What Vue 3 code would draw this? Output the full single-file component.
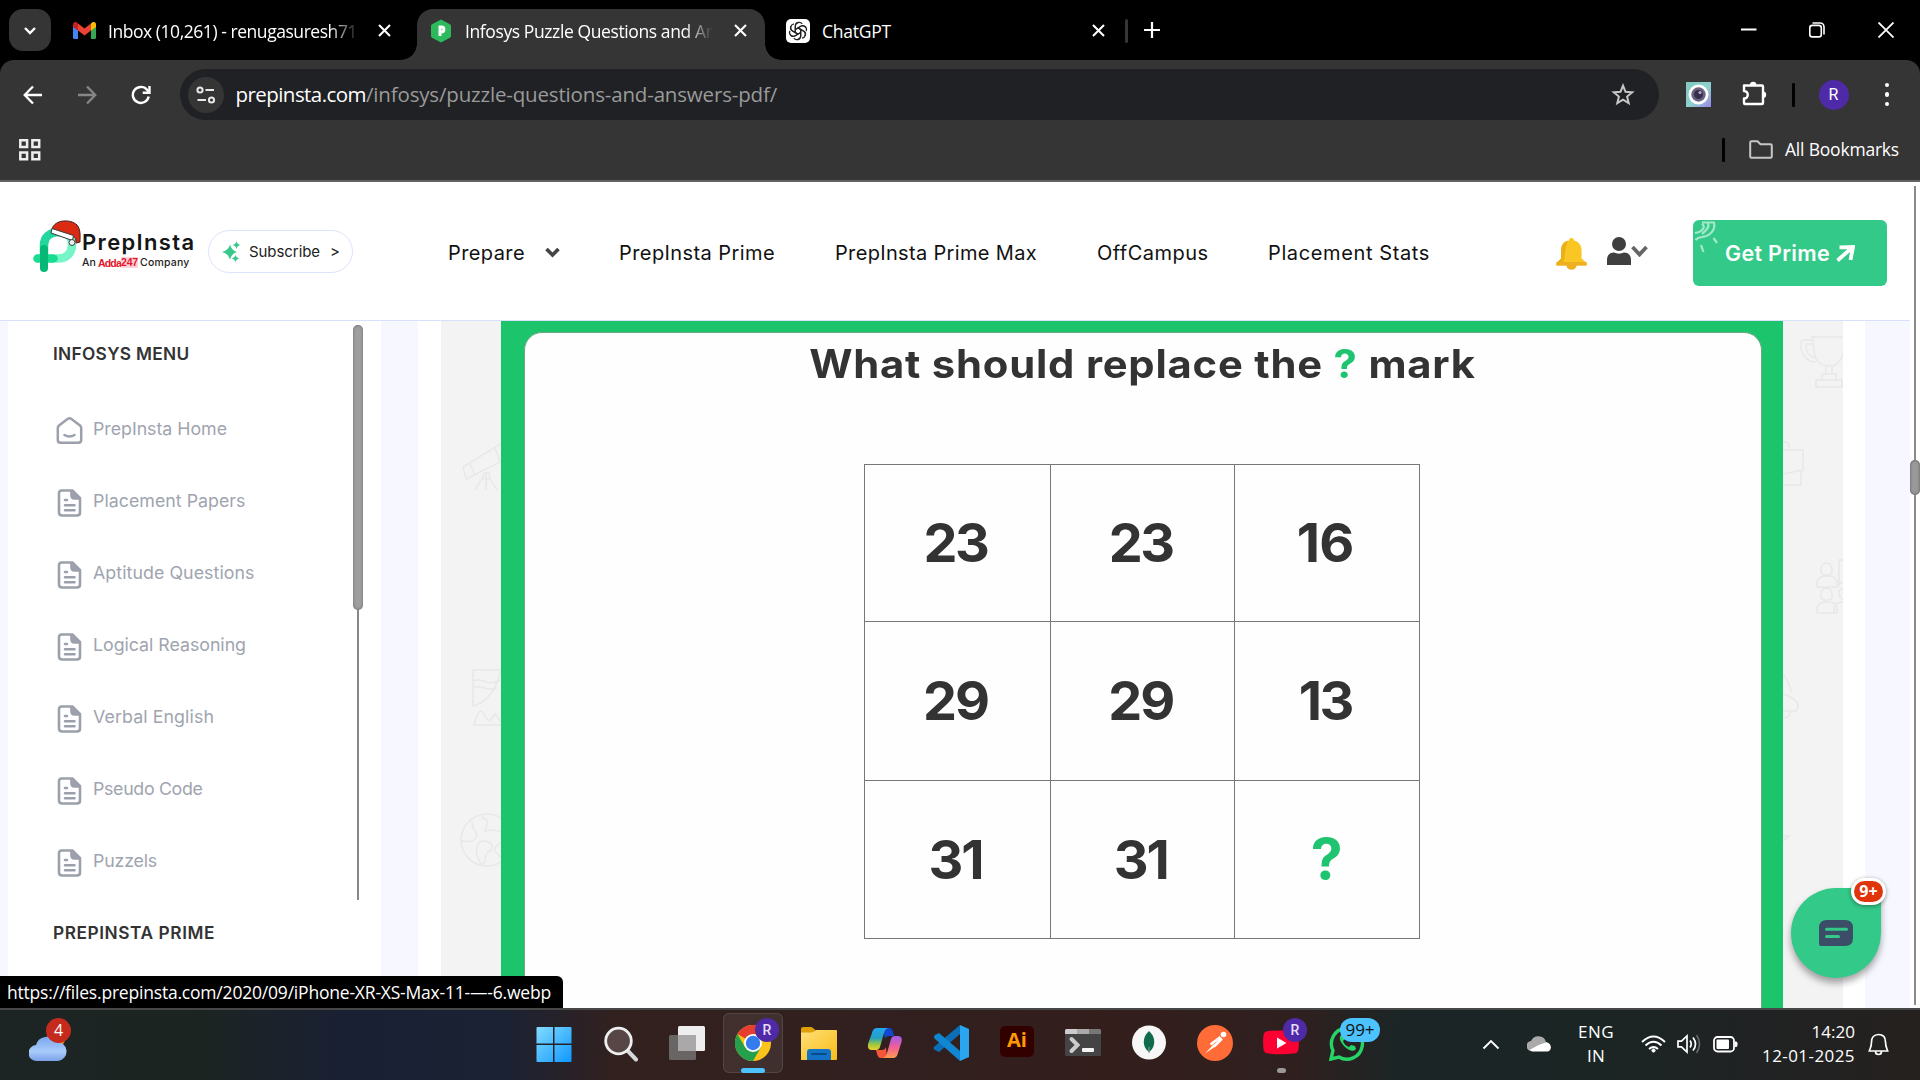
<script setup>
// Stretches or tightens letter spacing so a label takes the given width in px.
const vFit = {
  mounted(el, { value }) {
    const count = el.textContent.length
    const natural = el.getBoundingClientRect().width
    el.style.letterSpacing = (value - natural) / count + 'px'
  },
}

const menu = [
  { label: 'PrepInsta Home', width: 134, home: true },
  { label: 'Placement Papers', width: 152.5 },
  { label: 'Aptitude Questions', width: 161.5 },
  { label: 'Logical Reasoning', width: 153 },
  { label: 'Verbal English', width: 121 },
  { label: 'Pseudo Code', width: 109.5 },
  { label: 'Puzzels', width: 64 },
]

const cells = [
  ['23', 64], ['23', 64], ['16', 57],
  ['29', 65], ['29', 65], ['13', 53],
  ['31', 54], ['31', 54], ['?', 34],
]
</script>

<template>
  <div class="screen">
    <div class="tabs">
      <div class="tab-search">
        <svg width="14" height="9" viewBox="0 0 14 9"><path d="M2 2l5 5 5-5" fill="none" stroke="#fff" stroke-width="2.4" /></svg>
      </div>
      <div class="tab first">
        <svg class="fav" width="23" height="17" viewBox="0 0 23 17">
          <path d="M0 2.500V15.500Q0 17 1.500 17H5V6z" fill="#4285f4" />
          <path d="M23 2.500V15.500Q23 17 21.500 17H18V6z" fill="#34a853" />
          <path d="M5 8.500V1.500l6.500 5L18 1.500v7L11.500 13.500z" fill="#ea4335" />
          <path d="M0 2.500C0 0 2.500-1 5 1.500v7L0 5z" fill="#c5221f" />
          <path d="M23 2.500C23 0 20.500-1 18 1.500v7L23 5z" fill="#fbbc04" />
        </svg>
        <div class="tab-label l1"><span v-fit="249">Inbox (10,261) - renugasuresh71</span></div>
        <svg class="x" width="13" height="13" viewBox="0 0 13 13"><path d="M1 1l11 11M12 1L1 12" stroke="#fff" stroke-width="2.1" /></svg>
      </div>
      <div class="tab active">
        <svg class="fav" width="20" height="24" viewBox="0 0 20 24">
          <path d="M10 .5l9 4.800q1 .6 1 1.700v10q0 1.100-1 1.700L10 23.500 1 18.700q-1-.6-1-1.700V7q0-1.100 1-1.700z" fill="#2cba5c" />
          <path d="M9 17V8h1.500a2.300 2.300 0 010 4.800H9" fill="none" stroke="#fff" stroke-width="3" />
        </svg>
        <div class="tab-label l2"><span v-fit="251">Infosys Puzzle Questions and An</span></div>
        <svg class="x" width="13" height="13" viewBox="0 0 13 13"><path d="M1 1l11 11M12 1L1 12" stroke="#fff" stroke-width="2.1" /></svg>
      </div>
      <div class="tab third">
        <svg class="fav" width="24" height="24" viewBox="0 0 24 24">
          <rect width="24" height="24" rx="5" fill="#fff" />
          <g fill="none" stroke="#222" stroke-width="1.200">
            <path v-for="a in 6" :key="a" :transform="`rotate(${a * 60} 12 12)`" d="M9.300 13.600V7.200a3.900 3.900 0 016.900-2.300M9.300 10.400l5.400-3.100a3.900 3.900 0 015.200 1.100" />
          </g>
        </svg>
        <div class="tab-label l3"><span v-fit="69">ChatGPT</span></div>
        <svg class="x" width="13" height="13" viewBox="0 0 13 13"><path d="M1 1l11 11M12 1L1 12" stroke="#fff" stroke-width="2.1" /></svg>
      </div>
      <i class="tab-rule"></i>
      <svg class="plus" width="16" height="16" viewBox="0 0 16 16"><path d="M8 0v16M0 8h16" stroke="#fff" stroke-width="2.200" /></svg>
      <div class="win">
        <svg width="16" height="16" viewBox="0 0 16 16"><path d="M0 7.500h15.500" stroke="#fff" stroke-width="2" /></svg>
        <svg width="16" height="16" viewBox="0 0 16 16" fill="none" stroke="#fff" stroke-width="1.600"><rect x=".8" y="3.400" width="11.500" height="11.500" rx="2.500" /><path d="M3.500 1h7.500a4 4 0 014 4v7.500" /></svg>
        <svg width="16" height="16" viewBox="0 0 16 16"><path d="M.5.5l15 15M15.500.5l-15 15" stroke="#fff" stroke-width="1.800" /></svg>
      </div>
    </div>

    <div class="chrome">
      <div class="toolbar">
        <svg class="t-back" width="20" height="20" viewBox="0 0 20 20" fill="none" stroke="#fff" stroke-width="2.300"><path d="M19 10H2M10 1.500L1.700 10l8.300 8.500" /></svg>
        <svg class="t-fwd" width="20" height="20" viewBox="0 0 20 20" fill="none" stroke="#868686" stroke-width="2.300"><path d="M1 10h17M10 1.500l8.300 8.500-8.300 8.500" /></svg>
        <svg class="t-rel" width="20" height="20" viewBox="0 0 20 20" fill="none" stroke="#fff" stroke-width="2.400"><path d="M17.700 11.500A8 8 0 1116 4.800L18 7.300M18.500 1v6.800h-6.800" /></svg>
        <div class="url">
          <div class="site">
            <svg width="20" height="18" viewBox="0 0 20 18" fill="none" stroke="#e8e8e8" stroke-width="2"><circle cx="4" cy="4" r="2.600" /><path d="M9.500 4H18M1.500 14H10" /><circle cx="15.500" cy="14" r="2.600" /></svg>
          </div>
          <span v-fit="130.500" class="host">prepinsta.com</span><span v-fit="411" class="path">/infosys/puzzle-questions-and-answers-pdf/</span>
          <svg class="star" width="24" height="23" viewBox="0 0 24 23"><path d="M12 2.600l2.500 6.200 6.700.5-5.100 4.300 1.600 6.500-5.700-3.500-5.700 3.500 1.600-6.500L2.800 9.300l6.700-.5z" fill="none" stroke="#c7c7c7" stroke-width="2" /></svg>
        </div>
        <svg class="ext" width="25" height="25" viewBox="0 0 25 25">
          <defs><linearGradient id="eg" x1="0" y1="0" x2="1" y2="1"><stop offset="0" stop-color="#7fc9bf" /><stop offset=".55" stop-color="#8fd0cf" /><stop offset="1" stop-color="#9a86e8" /></linearGradient></defs>
          <rect width="25" height="25" fill="url(#eg)" /><circle cx="12.500" cy="12.500" r="10" fill="#fff" /><circle cx="12.500" cy="12.500" r="7.200" fill="#6b6180" /><circle cx="12.500" cy="12.500" r="4.500" fill="#37304d" /><circle cx="14" cy="10.500" r="1.500" fill="#b7aecb" />
        </svg>
        <svg class="puz" width="25" height="25" viewBox="0 0 25 25"><path d="M2 4.500h18q1 0 1 1V22q0 1-1 1H3q-1 0-1-1v-4.500c5 0 5-7.500 0-7.500z" fill="none" stroke="#fff" stroke-width="2.400" stroke-linejoin="round" /><path d="M8 4a3.200 3.200 0 016.400 0zM21 10.500a3.200 3.200 0 010 6.400z" fill="#fff" /></svg>
        <i class="bar"></i>
        <div class="avatar">R</div>
        <div class="dots"><i></i><i></i><i></i></div>
      </div>
      <div class="bookmarks">
        <svg width="22" height="22" viewBox="0 0 22 22" fill="none" stroke="#eee" stroke-width="2.500"><path d="M1.300 1.300h6.800v6.800H1.300zM13.400 1.300h6.800v6.800h-6.800zM1.300 13.400h6.800v6.800H1.300zM13.400 13.400h6.800v6.800h-6.800z" /></svg>
        <i class="bar"></i>
        <svg width="24" height="19" viewBox="0 0 24 19"><path d="M2.500 1.200h6l3 3h10q1.300 0 1.300 1.300v11q0 1.300-1.300 1.300h-19q-1.300 0-1.300-1.300v-14q0-1.300 1.300-1.300z" fill="none" stroke="#c7c7c7" stroke-width="2" /></svg>
        <span v-fit="114" class="all">All Bookmarks</span>
      </div>
    </div>

    <div class="page">
      <header>
        <div class="logo">
          <svg width="49" height="54" viewBox="0 0 49 54" fill="none">
            <path d="M23 38.500h2c9 0 14-6 14-14 0-3-1-7-4-10" stroke="#76f5c9" stroke-width="8.500" />
            <path d="M11 38V25c0-7 5-12.500 14-13 4 0 7 1 9 3" stroke="#21d79d" stroke-width="8.500" />
            <path d="M4.500 38.500h16" stroke="#18dc8f" stroke-width="8.500" stroke-linecap="round" />
            <path d="M11 29v19" stroke="#05b878" stroke-width="8" stroke-linecap="round" />
            <path d="M19 9C22-1 38-1 44 5c4 5 3 11 3 17l-4 1c0-5-1-6-3-6z" fill="#db2b13" stroke="#3a2320" />
            <path d="M19 8.500l21.500 7-1 5L18 13z" fill="#fff" stroke="#3a3a3a" />
            <circle cx="39" cy="22.500" r="3" fill="#eee" stroke="#444" />
          </svg>
          <div class="brand">
            <b v-fit="113.500">PrepInsta</b>
            <small><span v-fit="14">An</span><em><span v-fit="23">Adda</span><u><span v-fit="17">247</span></u></em><span v-fit="49.500">Company</span></small>
          </div>
        </div>
        <div class="sub">
          <svg width="19" height="21" viewBox="0 0 19 21" fill="#37c98c"><path d="M8 3.500q1.500 6 7 7.500-5.500 1.500-7 7.500-1.500-6-8-7.500 6.500-1.500 8-7.500zM14.500 0q.7 3.300 4 4-3.300.7-4 4-.7-3.300-4-4 3.300-.7 4-4zM13.500 14q.6 2.800 3.500 3.500-2.900.7-3.500 3.500-.7-2.800-3.500-3.500 2.800-.7 3.500-3.500z" /></svg>
          <span v-fit="71" class="sub-t">Subscribe</span><span v-fit="8">&gt;</span>
        </div>
        <nav>
          <span v-fit="77">Prepare</span>
          <svg width="15" height="11" viewBox="0 0 15 11"><path d="M1.500 2l6 6 6-6" fill="none" stroke="#444" stroke-width="3.600" /></svg>
          <span v-fit="156" class="n2">PrepInsta Prime</span>
          <span v-fit="202" class="n3">PrepInsta Prime Max</span>
          <span v-fit="111.500" class="n4">OffCampus</span>
          <span v-fit="162" class="n5">Placement Stats</span>
        </nav>
        <svg class="bell" width="31" height="32" viewBox="0 0 31 32">
          <path d="M15.500 0c2 0 2.500 1.400 2.500 2.600 5 1.200 7.600 5 7.600 10v8l5 4.400v2.400H.4V25l5-4.400v-8c0-5 2.600-8.800 7.600-10C13 1.400 13.500 0 15.500 0z" fill="#f9c623" /><path d="M.4 24h30.200v3.400H.4zM10.500 27.400h10a5 4.400 0 01-10 0z" fill="#eeb020" /><path d="M12 2.800c-5 1.200-7 5-7 9.800v8L1 24.500h6c3-5 1-14 5-21.700z" fill="#eab018" />
        </svg>
        <svg class="user" width="24" height="28" viewBox="0 0 24 28" fill="#3f3f3f"><ellipse cx="12" cy="7" rx="7" ry="7" /><path d="M0 28v-5c0-5 3-7.500 7-7.500 3 1.500 7 1.500 10 0 4 0 7 2.500 7 7.500v5z" /></svg>
        <svg class="uchev" width="17" height="12" viewBox="0 0 17 12"><path d="M1.500 2l7 7.500 7-7.500" fill="none" stroke="#666" stroke-width="3.800" /></svg>
        <div class="prime">
          <svg class="rocket" width="24" height="33" viewBox="0 0 24 33" fill="none" stroke="#a4e8cb" stroke-width="2.200"><path d="M8 4c4 2 1 8-7 9M8 2.500h12c2 8-5 14-12 14.500-3 .5-5 1-6.500 3M14 3c2 5-3 8-6 11M19.500 18l3.500 5M7 25l2.500 7" /></svg>
          <span v-fit="105">Get Prime</span>
          <svg width="19" height="17" viewBox="0 0 19 17"><path d="M1.500 15.500L14.500 4M3.500 2.300l13.500-.3-2.500 13" fill="none" stroke="#fff" stroke-width="3.800" /></svg>
        </div>
      </header>

      <div class="content">
        <aside>
          <div class="menu-scroll">
            <div class="menu">
              <h4><span v-fit="136.500">INFOSYS MENU</span></h4>
              <div v-for="m in menu" :key="m.label" class="item">
                <svg v-if="m.home" width="27" height="28" viewBox="0 0 27 28" fill="none" stroke="#9ba0ac" stroke-width="2.500"><path d="M3 8.500L11.500 2q2-1.300 4 0L24 8.500q1.200 1 1.200 2.500v12q0 2.700-2.700 2.700h-18Q1.800 25.700 1.800 23V11q0-1.500 1.200-2.500zM8.500 18q5 3 10 0" stroke-linecap="round" /></svg>
                <svg v-else width="27" height="28" viewBox="0 0 27 28" fill="none" stroke="#9ba0ac" stroke-width="2.600"><path d="M5.500 1.500h11l7.500 7.500v14.500q0 3-3 3H6q-3 0-3-3v-19q0-3 2.500-3z" /><path d="M15.500 2v4.500q0 3 3 3H24" fill="#9ba0ac" /><path d="M9 11h2M9 16.200h9.500M9 21.300h9.500" stroke-linecap="round" stroke-width="2.600" /></svg>
                <span v-fit="m.width">{{ m.label }}</span>
              </div>
            </div>
            <div class="track"><i></i></div>
          </div>
          <h4 class="second"><span v-fit="162">PREPINSTA PRIME</span></h4>
        </aside>
        <main>
          <svg class="doodle" width="60" height="687" viewBox="0 0 60 687">
            <path d="M22 146l39-24M25 158l36-18M22 146l3 12M29 143l5 11M54 127l5 13M40 159l-6 10M45 152v17M50 159l6 10M41 158h8l-1-6h-5z" />
            <path d="M60 349H32v36c16-4 24-20 28-36M32 360c10-5 14 7 27-1M32 367c9-5 14 5 24 0M32 404h29M33 404c4-17 8-17 12-7l4 3 5-7 6 8" />
            <circle cx="46" cy="519" r="26" /><path d="M31 500c-1 10 9 12 3 18-4 4-10 2-13 2M40 496c12 4 4 8 4 14 8-3 12 1 16 0M39 521c10-4 17 6 8 10-5 4-1 13-7 12-3-5-8-15-1-22zM60 522q-12 6 0 14" />
          </svg>
          <div class="green">
            <div class="board">
              <h1><span v-fit="665">What should replace the <b class="q">?</b> mark</span></h1>
              <div class="grid">
                <div v-for="(c, i) in cells" :key="i" class="cell" :class="{ q: c[0] === '?' }"><span v-fit="c[1]">{{ c[0] }}</span></div>
              </div>
            </div>
          </div>
          <svg class="doodle" width="60" height="687" viewBox="0 0 60 687">
            <path d="M28 16h32M30 16c0 20 3 27 14 29h5c9-2 12-10 13-29M29 19H19c-4 10 3 22 14 22M29 23h-6c-1 8 3 12 9 14M43 46v7M49 46v7M39 53h14v6H39zM33 59h26v7H33zM26 57v.5M28 48v.5M59 56v.5" />
            <path d="M0 129h20v20L0 153M18 150v14H0M0 121h3q3 0 3 7" />
            <path d="M38 251v-3a5.500 6 0 0111 0v3c0 4-11 4-11 0zM34 266v-4q1-7 8-7h4q7 0 8 7v4zM38 276v-3a5.500 6 0 0111 0v3c0 4-11 4-11 0zM34 292v-4q1-7 8-7h4q7 0 8 7v4zM51 292v-4q1-7 9-7M56 266v-27h4M56 262h4M60 267q-5 2-4 6t4 6" />
            <path d="M0 353q7 10 8 18M0 373q15 5 15 12-1 5-3 5H0M8 391q-3 8-8 5M0 515h6l-6 5" />
          </svg>
        </main>
        <div class="page-scroll"></div>
      </div>
      <div class="vtrack"><i></i></div>
      <div class="status"><span v-fit="544">https://files.prepinsta.com/2020/09/iPhone-XR-XS-Max-11-—-6.webp</span></div>
      <div class="chat">
        <svg width="34" height="26" viewBox="0 0 34 26"><path d="M8 0h18q8 0 8 8v10q0 8-8 8H2q-2 0-2-2V8q0-8 8-8z" fill="#3b4d67" /><path d="M7.500 9.300h20M7.500 16.500h12" stroke="#33c989" stroke-width="3" stroke-linecap="round" /></svg>
        <div class="count">9+</div>
      </div>
    </div>

    <footer>
      <div class="weather">
        <svg width="38" height="36" viewBox="0 0 38 36">
          <defs><linearGradient id="wc" x1="0" y1="0" x2="0" y2="1"><stop offset="0" stop-color="#7ba6ef" /><stop offset=".6" stop-color="#a9cbfa" /><stop offset="1" stop-color="#7aa2e8" /></linearGradient></defs>
          <circle cx="27" cy="13" r="9" fill="#f08a24" /><path d="M8 35a8 8 0 01-1-16A11 11 0 0127 16a9.500 9.500 0 012 19z" fill="url(#wc)" />
        </svg>
        <div class="wb">4</div>
      </div>
      <div class="apps">
        <div class="app start"><svg viewBox="0 0 36 36"><defs><linearGradient id="wg" x1="0" y1="0" x2="1" y2="1"><stop offset="0" stop-color="#83dcff" /><stop offset="1" stop-color="#0e97ff" /></linearGradient></defs><path d="M1.500 1H17v16.500H.5V2q0-1 1-1zM18.500 1h16q1 0 1 1v15.500h-17zM.5 19H17v17H1.500q-1 0-1-1zM18.500 19h17v16q0 1-1 1h-16z" fill="url(#wg)" /></svg></div>
        <div class="app start"><svg viewBox="0 0 36 36"><path d="M25 24l9 9.500" stroke="#d5d7da" stroke-width="4" stroke-linecap="round" /><circle cx="16.500" cy="15" r="12.800" fill="#584647" stroke="#eceeef" stroke-width="2.800" /></svg></div>
        <div class="app"><svg viewBox="0 0 36 36"><rect x="9" y="1" width="27" height="25" rx="1.500" fill="#eee" /><rect y="10" width="27" height="25" rx="1.500" fill="#6a6565" /><path d="M9 10h18v16H9z" fill="#aaa8a8" /></svg></div>
        <div class="app on"><svg viewBox="0 0 36 36"><circle cx="18" cy="18" r="18" fill="#fcc31a" /><path d="M18 18L2.400 9A18 18 0 0133.600 9H18z" fill="#e53e30" /><path d="M2.400 9A18 18 0 0018 36l7.800-13.500L10.200 22.500z" fill="#25a04c" /><circle cx="18" cy="18" r="9" fill="#fff" /><circle cx="18" cy="18" r="7.200" fill="#347bed" /></svg><b class="rb">R</b><i class="ind"></i></div>
        <div class="app"><svg viewBox="0 0 36 36"><defs><linearGradient id="fg" x1="0" y1="0" x2="1" y2="1"><stop offset="0" stop-color="#ffe07a" /><stop offset="1" stop-color="#f9bc16" /></linearGradient></defs><path d="M0 4q0-2 2-2h8.500l4 3-4 4H0z" fill="#e09f04" /><path d="M0 7.500h11l4-2.500h20q1 0 1 1v28q0 1-1 1H0z" fill="url(#fg)" /><path d="M6 35V27q0-3 3-3h18q3 0 3 3v8z" fill="#1273c6" /><path d="M11 29h14" stroke="#0a4a88" stroke-width="1.800" stroke-linecap="round" /></svg></div>
        <div class="app"><svg viewBox="0 0 36 36"><defs><linearGradient id="c1" x1="0" y1="0" x2="0" y2="1"><stop offset="0" stop-color="#22a7f2" /><stop offset=".45" stop-color="#23a0c0" /><stop offset=".75" stop-color="#9cc83f" /><stop offset="1" stop-color="#efcf2c" /></linearGradient><linearGradient id="c2" x1="0" y1="0" x2="0" y2="1"><stop offset="0" stop-color="#a05cf0" /><stop offset=".5" stop-color="#ef5f95" /><stop offset="1" stop-color="#ff9a50" /></linearGradient></defs><path d="M16 3h6q3 0 4 4l1 4h-5q-3 0-4 3z" fill="#1347d0" /><path d="M20 33h-6q-3 0-4-4l-1-4h6q3 0 4-3z" fill="#f5553a" /><path d="M10 3h11q-3 1-4 5l-4 14q-1 3-4 3H5q-5 0-4-6L5 8q1-5 5-5z" fill="url(#c1)" /><path d="M26 33H16q3-1 4-5l4-14q1-3 4-3h3q5 0 3.500 6L31 28q-1 5-5 5z" fill="url(#c2)" /></svg></div>
        <div class="app"><svg viewBox="0 0 36 36"><path d="M27 0v9L6 27 2 25q-3-2 0-4z" fill="#0b6fb8" /><path d="M2 10l4-2 21 18v10L2 14q-2-2 0-4z" fill="#1087d0" /><path d="M27 0l9 4v28l-9 4z" fill="#2aa5ef" /></svg></div>
        <div class="app"><div class="ai">Ai</div></div>
        <div class="app"><svg viewBox="0 0 36 36"><rect y="4" width="36" height="27" rx="1.500" fill="#444" /><path d="M0 9V5.500Q0 4 1.500 4H12v5z" fill="#ccc" /><path d="M12 4h12v5H12z" fill="#aaa" /><path d="M24 4h10.500Q36 4 36 5.500V9H24z" fill="#777" /><path d="M6.500 14l6 6-6 6" fill="none" stroke="#ccc" stroke-width="4" stroke-linecap="round" /><rect x="17" y="23" width="12" height="4" rx="1" fill="#f4f4f4" /></svg></div>
        <div class="app"><svg viewBox="0 0 36 36"><circle cx="18" cy="17.500" r="17" fill="#f7f7f7" /><path d="M18 6c7 6 7 16 0 21-7-5-7-15 0-21z" fill="#0f6b4b" /><path d="M18 22v6" stroke="#7a9a8c" stroke-width="1.200" /></svg></div>
        <div class="app"><svg viewBox="0 0 36 36"><circle cx="18" cy="18" r="18" fill="#ff6c37" /><circle cx="26.500" cy="9.500" r="2.800" fill="#fff" /><path d="M23.500 12L13.500 19.500M25 13.500l-8 8" stroke="#fff" stroke-width="2.600" /><path d="M17 19l2 2-11 7.500z" fill="#fff" /></svg></div>
        <div class="app"><svg viewBox="0 0 36 36"><path d="M5 6q13-1 26 0 4 .5 4.500 4 .8 7 0 14-.5 4-4.500 4.500-13 1.500-26 0Q1 28 .5 24q-.8-7 0-14Q1 6.500 5 6z" fill="#fb0233" /><path d="M14 12.500l9.500 5.500-9.500 5.500z" fill="#fff" /></svg><b class="rb">R</b><i class="ind idle"></i></div>
        <div class="app"><svg viewBox="0 0 36 36"><path d="M2 34l2-8.500A15.500 15.500 0 1110 32z" fill="none" stroke="#25d366" stroke-width="3.400" /><path d="M12 10c-3 3 0 8 4 12s9 5 11 2l-1-3-4-1-2 2c-3-1-5-3-6-6l2-2-2-4z" fill="#25d366" /></svg><b class="wab">99+</b></div>
      </div>
      <div class="tray">
        <svg class="ch" width="18" height="11" viewBox="0 0 18 11"><path d="M1.500 9.500L9 2l7.500 7.500" fill="none" stroke="#fff" stroke-width="1.900" /></svg>
        <svg class="cl" width="24" height="16" viewBox="0 0 24 16"><path d="M5 15a5 5 0 01-1-10A8 8 0 0119 6a5 5 0 012 9z" fill="#aaa" /><path d="M2.500 14l9-5L19 6.500c6 0 6.500 9 1 9H5z" fill="#fff" /></svg>
        <div class="lang"><span v-fit="36">ENG</span><span v-fit="18">IN</span></div>
        <svg class="wf" width="25" height="18" viewBox="0 0 25 18" fill="none" stroke="#fff" stroke-width="1.900"><path d="M1 7q11.500-11 23 0M4.500 10.500q8-7.500 16 0M8 14q4.500-4 9 0" /><circle cx="12.500" cy="15.500" r="1.600" fill="#fff" stroke-width="1" /></svg>
        <svg class="sp" width="25" height="20" viewBox="0 0 25 20" fill="none" stroke="#fff" stroke-width="1.700"><path d="M1 7.200h3.500L10 2v16l-5.500-5.200H1zM13 6.500q2.500 3.500 0 7M16 3.500q5 6.500 0 13" /><path d="M19.500 1q6 9 0 18" stroke="#666" /></svg>
        <svg class="ba" width="25" height="17" viewBox="0 0 25 17"><rect x="1" y="1" width="20" height="14.500" rx="3.500" fill="none" stroke="#fff" stroke-width="1.800" /><rect x="3.500" y="3.500" width="12.500" height="9.500" rx="1" fill="#fff" /><path d="M22 5.500h1q1.500 0 1.500 2v1.500q0 2-1.500 2h-1z" fill="#fff" /></svg>
        <div class="clock"><span v-fit="43.500">14:20</span><span v-fit="93">12-01-2025</span></div>
        <svg class="nb" width="21" height="23" viewBox="0 0 21 23" fill="none" stroke="#fff" stroke-width="1.700"><path d="M10.500 1.500c5 0 7 3.500 7 7.500 0 5 1.500 6.500 2.200 9H1.300c.7-2.500 2.200-4 2.200-9 0-4 2-7.500 7-7.500zM7.500 18.500q0 3 3 3t3-3" /></svg>
      </div>
    </footer>
  </div>
</template>

<style>
html, body { margin: 0; background: #000; overflow: hidden; }
</style>

<style scoped>
* { box-sizing: border-box; }
.screen { width: 1920px; height: 1080px; display: flex; flex-direction: column; overflow: hidden; font-family: "Open Sans", "Noto Sans", sans-serif; color: #fff; }
svg { flex: none; display: block; }
span { white-space: nowrap; display: inline-block; flex: none; }
i { flex: none; }

.tabs { height: 60px; background: #000; display: flex; align-items: center; flex: none; }
.tab-search { width: 42px; height: 42px; margin-left: 9px; border-radius: 14px; background: #353535; display: flex; align-items: center; justify-content: center; flex: none; }
.tab { display: flex; align-items: center; height: 51px; margin-top: 9px; flex: none; padding-bottom: 8px; font-size: 17.5px; }
.first { width: 366px; padding-left: 22px; }
.active { width: 348px; padding-left: 14px; background: #353535; border-radius: 16px 16px 0 0; position: relative; }
.active::before, .active::after { content: ""; position: absolute; bottom: 0; width: 16px; height: 16px; }
.active::before { left: -16px; background: radial-gradient(circle at 0 0, #000 15.500px, #353535 16px); }
.active::after { right: -16px; background: radial-gradient(circle at 100% 0, #000 15.500px, #353535 16px); }
.third { width: 361px; padding-left: 21px; }
.tab-label { overflow: hidden; line-height: 28px; }
.l1 { width: 252px; margin: 0 18px 0 12px; mask-image: linear-gradient(90deg, #000 88%, rgba(0,0,0,.25) 97%, transparent 99%); }
.l2 { width: 253px; margin: 0 16px 0 14px; mask-image: linear-gradient(90deg, #000 87%, transparent 98%); }
.l3 { width: 258px; margin: 0 12px 0 12px; }
.tab-rule { width: 3px; height: 24px; background: #353535; border-radius: 2px; margin-top: 2px; margin-left: -1px; }
.plus { margin-left: 16px; }
.win { display: flex; gap: 52.500px; margin-left: auto; margin-right: 26.500px; }

.chrome { height: 122px; background: #353535; border-bottom: 2px solid #636363; flex: none; border-radius: 14px 14px 0 0; }
.toolbar { height: 69px; display: flex; align-items: center; }
.t-back { margin-left: 23px; }
.t-fwd { margin-left: 34px; }
.t-rel { margin-left: 34px; }
.url { width: 1479px; height: 51px; margin-left: 29px; border-radius: 26px; background: #202124; display: flex; align-items: center; font-size: 20.500px; line-height: 28px; flex: none; }
.url span { margin-top: -2px; }
.site { width: 36px; height: 36px; border-radius: 50%; background: #353535; margin: 0 11.500px 0 8px; display: flex; align-items: center; justify-content: center; flex: none; }
.host { color: #fff; }
.path { color: #9a9a9a; }
.star { margin-left: auto; margin-right: 24px; }
.ext { margin-left: 27px; }
.puz { margin-left: 30.500px; margin-top: -3px; }
.bar { width: 3px; height: 24px; background: #000; border-radius: 1px; }
.toolbar .bar { margin-left: 25px; }
.avatar { width: 30px; height: 30px; border-radius: 50%; background: #4f2aa8; margin-left: 24px; display: flex; align-items: center; justify-content: center; font: 16px Roboto, sans-serif; }
.dots { display: flex; flex-direction: column; gap: 5px; margin-left: 36px; }
.dots i { width: 4.500px; height: 4.500px; border-radius: 50%; background: #fff; }
.bookmarks { display: flex; align-items: center; padding: 0 21px 10px 19px; height: 51px; }
.bookmarks .bar { margin-left: auto; margin-right: 24px; }
.all { font-size: 17.500px; margin-left: 12px; line-height: 24px; margin-top: -1px; }

.page { height: 826px; flex: none; background: #fff; position: relative; color: #111; font-family: Inter, sans-serif; display: flex; flex-direction: column; }
header { height: 139px; width: 1910px; border-bottom: 1px solid #dadffb; display: flex; align-items: center; flex: none; }
.logo { display: flex; width: 162px; margin-left: 33px; margin-top: -9px; flex: none; }
.brand { display: flex; flex-direction: column; padding-top: 10px; }
.brand b { font-weight: 600; font-size: 22px; line-height: 25px; color: #151515; white-space: nowrap; display: inline-block; width: max-content; }
.brand small { font-size: 10.500px; line-height: 16px; display: flex; color: #222; font-weight: 500; }
.brand em { font: 700 10.500px/16px "Liberation Sans", sans-serif; color: #e4142c; display: flex; margin: 0 2px 0 2px; }
.brand u { text-decoration: none; background: #fbd3d8; display: flex; line-height: 11px; height: 11px; margin-top: 2px; }
.sub { width: 145px; height: 43px; margin-left: 13px; border: 1px solid #dde2fc; border-radius: 22px; display: flex; align-items: center; padding-left: 13px; font-size: 15px; flex: none; color: #222; }
.sub-t { margin-left: 8px; margin-right: 10px; }
nav { display: flex; align-items: center; font-size: 20px; margin-left: 95px; padding-top: 4px; flex: none; }
nav svg { margin-left: 20px; margin-top: -2px; }
.n2 { margin-left: 59px; } .n3 { margin-left: 60px; } .n4 { margin-left: 60px; } .n5 { margin-left: 59.500px; }
.bell { margin-left: 126px; margin-top: 6px; }
.user { margin-left: 20px; }
.prime { width: 194px; height: 66px; margin-left: 45px; margin-top: 4px; background: #33c989; border-radius: 6px; color: #fff; font-size: 21.500px; font-weight: 600; display: flex; align-items: center; padding-left: 32px; gap: 6px; position: relative; flex: none; }
.rocket { position: absolute; left: 1px; top: 0; }

.content { flex: 1; min-height: 0; display: flex; overflow: hidden; background: #f7f8ff; }
aside { width: 373px; margin-left: 8px; background: #fff; flex: none; }
.menu-scroll { display: flex; height: 579px; margin-bottom: 11px; padding-top: 4px; }
.menu { width: 345px; padding-left: 45px; padding-top: 17px; flex: none; }
h4 { margin: 0; font-size: 17.300px; line-height: 24px; font-weight: 600; color: #333; }
.menu h4 { margin-bottom: 38px; }
.item { height: 72px; display: flex; font-size: 17.800px; line-height: 24px; color: #a0a4af; padding-top: 13px; }
.item svg { margin: 0 10px 0 3px; }
.track { width: 10px; background: linear-gradient(90deg, transparent 4px, #888 4px, #888 6px, transparent 6px); height: 575px; }
.track i { display: block; height: 285px; border-radius: 5px; background: #9f9f9f; box-shadow: inset 0 0 3px #666; }
.second { padding-left: 45px; margin-top: 21px; }
main { width: 1447px; margin-left: 37px; padding: 0 22px 0 23px; background: #fff; display: flex; flex: none; }
.doodle { background: #f3f3f3; fill: none; stroke: #e8e8e8; stroke-width: 1.500; overflow: hidden; }
.green { width: 1282px; height: 687px; background: #1cc46c; padding: 11px 21px 0 23px; flex: none; }
.board { height: 700px; background: #fefefe; border: 1px solid #6fa583; border-radius: 18px 18px 0 0; display: flex; flex-direction: column; align-items: center; }
h1 { margin: 5px 0 0 -1px; font-size: 39px; line-height: 52px; font-weight: 700; color: #333; }
h1 span { transform: scaleX(1.07); }
h1 b { font-weight: inherit; }
.q { color: #1fc470; }
.grid { margin-top: 74px; margin-left: -3px; width: 556px; height: 475px; display: grid; grid-template-columns: 186px 184.500px 184.500px; grid-template-rows: 157px 159px 158px; border-left: 1px solid #777; border-top: 1px solid #777; flex: none; }
.cell { border-right: 1.500px solid #777; border-bottom: 1.500px solid #777; display: flex; align-items: center; justify-content: center; padding: 0 3px 1px 0; font-size: 54px; font-weight: 700; color: #333; }
.cell.q { color: #1fc470; padding: 0 0 2px 2px; font-size: 57px; }
.page-scroll { width: 10px; margin-left: auto; background: #fff; }
.vtrack { position: absolute; right: 0; top: 4px; width: 10px; height: 819px; background: linear-gradient(90deg, transparent 4px, #8b8b8b 4px, #8b8b8b 6px, transparent 6px); }
.vtrack i { display: block; position: relative; top: 274px; height: 35px; border-radius: 5px; background: #999; box-shadow: inset 0 0 3px #555; }
.status { position: absolute; left: 0; bottom: 0; width: 563px; height: 32px; background: #000; color: #fff; border-top-right-radius: 6px; font: 17.500px/33px "Open Sans", sans-serif; padding-left: 7px; }
.chat { position: absolute; left: 1791px; top: 706px; width: 90px; height: 90px; border-radius: 45px 8px 45px 45px; background: #33c989; box-shadow: 0 5px 7px rgba(0,0,0,.35); display: flex; align-items: center; justify-content: center; }
.count { position: absolute; right: -5px; top: -10px; width: 35px; height: 27px; border-radius: 14px; background: #e0350b; border: 3px solid #fff; color: #fff; font: 700 16px/20px "Open Sans", sans-serif; text-align: center; box-shadow: 0 1px 4px rgba(0,0,0,.4); }

footer { height: 72px; flex: none; position: relative; display: flex; border-top: 2px solid #474747; background: linear-gradient(90deg, #1c2523 0, #1c2422 200px, #1a2034 350px, #1a2233 500px, #33211f 620px, #31201f 900px, #331e1c 1100px, #2f201f 1300px, #1c2526 1400px, #1b2524 1600px, #202223 1750px, #25211f 1920px); }
.weather { width: 522px; padding: 16px 0 0 29px; position: relative; flex: none; }
.wb { position: absolute; left: 46px; top: 8px; width: 25px; height: 25px; border-radius: 50%; background: #c42b1c; text-align: center; font-size: 16px; line-height: 24px; }
.apps { display: flex; flex: none; padding-top: 3px; }
.app { width: 60px; height: 60px; margin: 0 3px; border-radius: 6px; display: flex; align-items: center; justify-content: center; position: relative; }
.app.start { padding-right: 3px; padding-top: 1px; }
.app svg { width: 36px; height: 36px; }
.on { background: rgba(255,255,255,.07); box-shadow: inset 0 0 0 1px rgba(255,255,255,.1); }
.rb { position: absolute; left: 32px; top: 5px; width: 24px; height: 24px; border-radius: 50%; background: #4f2aa8; font: 500 14px/24px Roboto, sans-serif; text-align: center; color: #e6defa; }
.ind { position: absolute; bottom: 0; left: 18px; width: 24px; height: 5px; border-radius: 3px; background: #4cc2ff; }
.ind.idle { left: 26px; width: 9px; background: #999; }
.ai { width: 34px; height: 31px; margin-top: -3px; border-radius: 5px; background: #330000; color: #ff9a00; font: 700 20px/28px "Open Sans", sans-serif; text-align: center; }
.wab { position: absolute; left: 23px; top: 5px; width: 40px; height: 24px; border-radius: 12px; background: #4cc2ff; color: #111; font-weight: 400; font-size: 17px; line-height: 24px; text-align: center; }
.tray { display: flex; align-items: center; font-size: 17px; line-height: 24px; flex: none; padding-bottom: 2px; }
.ch { margin-left: 102px; }
.cl { margin-left: 27px; }
.lang { display: flex; flex-direction: column; align-items: center; width: 36px; margin-left: 27px; }
.wf { margin-left: 27px; }
.sp { margin-left: 11px; }
.ba { margin-left: 11px; }
.clock { width: 93px; margin-left: 24px; display: flex; flex-direction: column; align-items: flex-end; }
.nb { margin-left: 13px; }
</style>
